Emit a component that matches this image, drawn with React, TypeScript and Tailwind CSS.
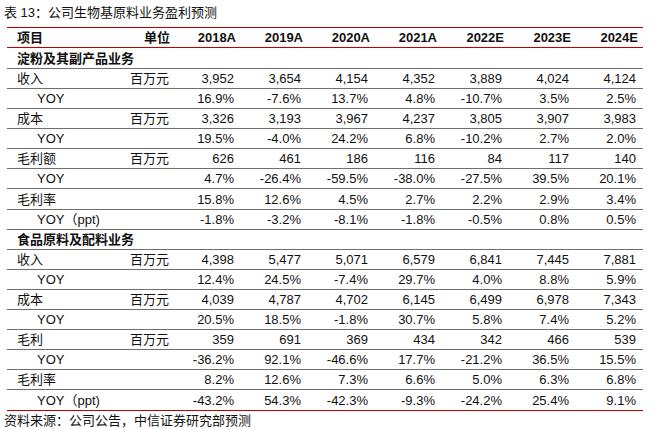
const YEARS = ["2018A", "2019A", "2020A", "2021A", "2022E", "2023E", "2024E"];

type Row =
  | { kind: "section"; label: string; h: string }
  | { kind: "data"; label: string; unit?: string; sub?: boolean; values: string[]; h: string };

const ROWS: Row[] = [
  { kind: "section", label: "淀粉及其副产品业务", h: "h-[21px]" },
  { kind: "data", label: "收入", unit: "百万元", values: ["3,952", "3,654", "4,154", "4,352", "3,889", "4,024", "4,124"], h: "h-[20px]" },
  { kind: "data", label: "YOY", sub: true, values: ["16.9%", "-7.6%", "13.7%", "4.8%", "-10.7%", "3.5%", "2.5%"], h: "h-[20px]" },
  { kind: "data", label: "成本", unit: "百万元", values: ["3,326", "3,193", "3,967", "4,237", "3,805", "3,907", "3,983"], h: "h-[20px]" },
  { kind: "data", label: "YOY", sub: true, values: ["19.5%", "-4.0%", "24.2%", "6.8%", "-10.2%", "2.7%", "2.0%"], h: "h-[20px]" },
  { kind: "data", label: "毛利额", unit: "百万元", values: ["626", "461", "186", "116", "84", "117", "140"], h: "h-[20px]" },
  { kind: "data", label: "YOY", sub: true, values: ["4.7%", "-26.4%", "-59.5%", "-38.0%", "-27.5%", "39.5%", "20.1%"], h: "h-[20px]" },
  { kind: "data", label: "毛利率", values: ["15.8%", "12.6%", "4.5%", "2.7%", "2.2%", "2.9%", "3.4%"], h: "h-[21px]" },
  { kind: "data", label: "YOY（ppt)", sub: true, values: ["-1.8%", "-3.2%", "-8.1%", "-1.8%", "-0.5%", "0.8%", "0.5%"], h: "h-[20px]" },
  { kind: "section", label: "食品原料及配料业务", h: "h-[20px]" },
  { kind: "data", label: "收入", unit: "百万元", values: ["4,398", "5,477", "5,071", "6,579", "6,841", "7,445", "7,881"], h: "h-[20px]" },
  { kind: "data", label: "YOY", sub: true, values: ["12.4%", "24.5%", "-7.4%", "29.7%", "4.0%", "8.8%", "5.9%"], h: "h-[20px]" },
  { kind: "data", label: "成本", unit: "百万元", values: ["4,039", "4,787", "4,702", "6,145", "6,499", "6,978", "7,343"], h: "h-[20px]" },
  { kind: "data", label: "YOY", sub: true, values: ["20.5%", "18.5%", "-1.8%", "30.7%", "5.8%", "7.4%", "5.2%"], h: "h-[20px]" },
  { kind: "data", label: "毛利", unit: "百万元", values: ["359", "691", "369", "434", "342", "466", "539"], h: "h-[20px]" },
  { kind: "data", label: "YOY", sub: true, values: ["-36.2%", "92.1%", "-46.6%", "17.7%", "-21.2%", "36.5%", "15.5%"], h: "h-[20px]" },
  { kind: "data", label: "毛利率", values: ["8.2%", "12.6%", "7.3%", "6.6%", "5.0%", "6.3%", "6.8%"], h: "h-[20px]" },
  { kind: "data", label: "YOY（ppt)", sub: true, values: ["-43.2%", "54.3%", "-42.3%", "-9.3%", "-24.2%", "25.4%", "9.1%"], h: "h-[21px]" },
];

const GRID = "grid grid-cols-[100px_63px_repeat(7,67px)] items-center";

export default function App() {
  return (
    <div
      className="w-[659px] h-[429px] bg-white text-[#111] text-[13px] leading-none overflow-hidden"
      style={{ fontFamily: '"Liberation Sans", Arial, "Noto Sans CJK SC", sans-serif' }}
    >
      <div className="h-[27px] flex items-center pl-[4px] pb-[2px]">表 13：公司生物基原料业务盈利预测</div>

      <div className="ml-[7px] w-[636px]">
        <div className={`${GRID} h-[21px] border-t border-b border-[#c00000] font-bold`}>
          <div className="pl-[10px]">项目</div>
          <div className="text-right">单位</div>
          {YEARS.map((y) => (
            <div key={y} className="text-right pr-[1px]">{y}</div>
          ))}
        </div>

        {ROWS.map((r, i) => {
          const last = i === ROWS.length - 1;
          const border = last ? "border-b border-[#c00000]" : "border-b border-[#6f6f6f]";
          if (r.kind === "section") {
            return (
              <div key={i} className={`flex items-center ${r.h} ${border} pl-[10px] font-bold`}>
                {r.label}
              </div>
            );
          }
          return (
            <div key={i} className={`${GRID} ${r.h} ${border}`}>
              <div className={r.sub ? "pl-[30px]" : "pl-[10px]"}>{r.label}</div>
              <div className="text-right pr-[1px]">{r.unit ?? ""}</div>
              {r.values.map((v, j) => (
                <div key={j} className="text-right pr-[3px]">{v}</div>
              ))}
            </div>
          );
        })}
      </div>

      <div className="h-[19px] flex items-center pl-[4px]">资料来源：公司公告，中信证券研究部预测</div>
    </div>
  );
}
